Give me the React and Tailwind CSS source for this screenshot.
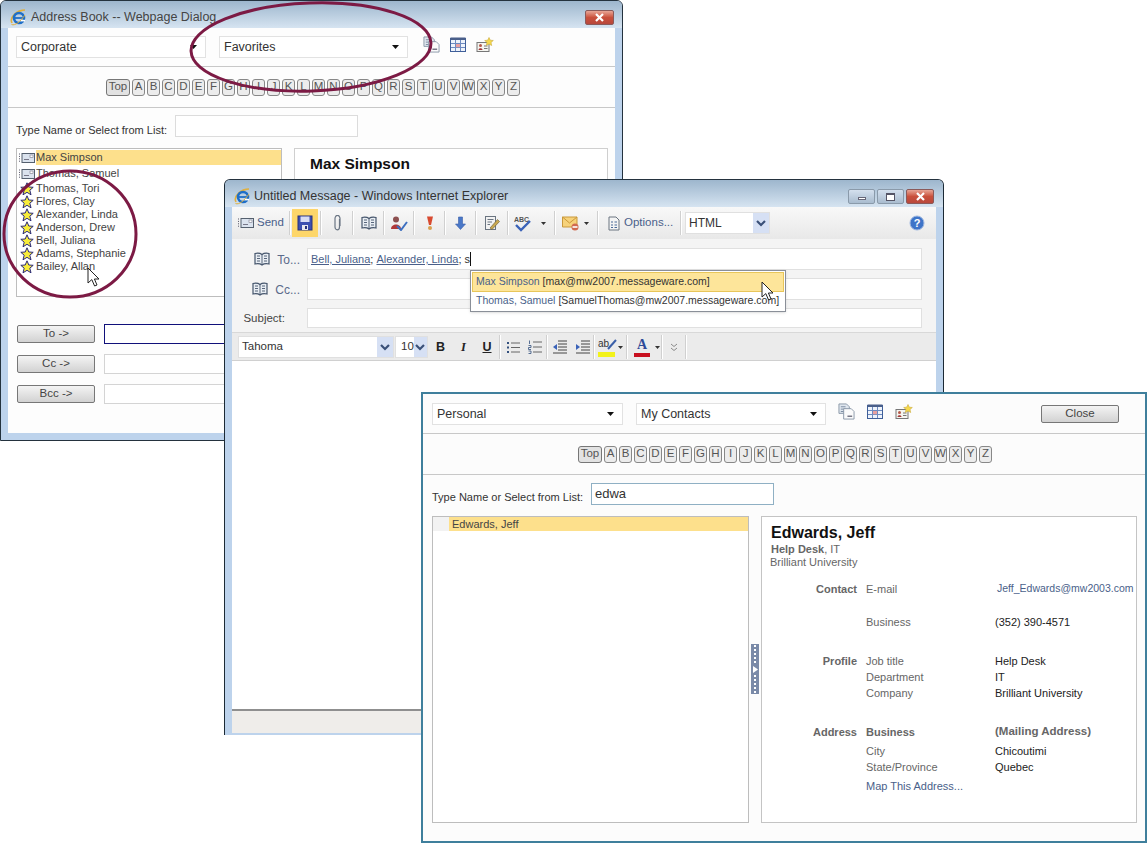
const LETTERS = 'ABCDEFGHIJKLMNOPQRSTUVWXYZ'.split('')

function IeLogo() {
  return (
    <svg width="17" height="17" viewBox="0 0 17 17" className="shrink-0">
      <path d="M2 14 C-1 8 7 1 15 1 C13 1 9 2 6 5" fill="none" stroke="#e0b040" strokeWidth="1.6" />
      <circle cx="9" cy="9" r="5" fill="none" stroke="#1f6fc8" strokeWidth="2.6" />
      <path d="M5 9 H14" stroke="#1f6fc8" strokeWidth="1.8" />
      <path d="M11 11.6 H15" stroke="#fff" strokeWidth="1.6" />
      <path d="M1.5 15.5 C5 17 10 13 15 6" fill="none" stroke="#e0b040" strokeWidth="1" />
    </svg>
  )
}

function CloseBtn({ className = 'w-[29px]' }) {
  return (
    <div className={`h-[15px] rounded-[2px] border border-[#8a5a5a] bg-gradient-to-b from-[#e7a596] via-[#c9503c] to-[#b8483c] flex items-center justify-center ${className}`}>
      <svg width="11" height="9" viewBox="0 0 11 9">
        <path d="M2 1 L9 8 M9 1 L2 8" stroke="#fff" strokeWidth="2.2" />
      </svg>
    </div>
  )
}

function Caret() {
  return (
    <svg width="7" height="4" viewBox="0 0 7 4" className="shrink-0">
      <path d="M0 0 H7 L3.5 4 Z" fill="#111" />
    </svg>
  )
}

function Select({ label, className }) {
  return (
    <div className={`h-[22px] bg-white border border-[#e2e2e2] flex items-center justify-between pl-[4px] pr-[8px] text-[12.5px] text-[#333] ${className}`}>
      <span className="mt-[2px]">{label}</span>
      <Caret />
    </div>
  )
}

function BlueSelect({ label, className, size = 'w-[16px]' }) {
  return (
    <div className={`h-[22px] bg-white border border-[#e0e0e0] flex items-center justify-between pl-[3px] text-[#333] ${className}`}>
      <span>{label}</span>
      <div className={`h-full bg-[#d6e0f4] flex items-center justify-center ${size}`}>
        <svg width="10" height="7" viewBox="0 0 10 7">
          <path d="M1 1 L5 5 L9 1" fill="none" stroke="#3a5078" strokeWidth="2.2" />
        </svg>
      </div>
    </div>
  )
}

function DocIcon() {
  return (
    <svg width="17" height="17" viewBox="0 0 18 18">
      <path d="M1 1 H9 L12 4 V11 H1 Z" fill="#dfe6ee" stroke="#8a98a8" />
      <path d="M3 4 H8 M3 6.5 H9 M3 9 H8" stroke="#7a8aa0" />
      <path d="M6 6 H14 L17 9 V17 H6 Z" fill="#fbfbfb" stroke="#8a98a8" />
      <path d="M10 14 H15" stroke="#667" strokeWidth="1.4" />
    </svg>
  )
}

function CalIcon() {
  return (
    <svg width="16" height="15" viewBox="0 0 16 15">
      <rect x="0.5" y="1.5" width="15" height="13" fill="#eef3fb" stroke="#3f5f99" />
      <rect x="0.5" y="0.5" width="15" height="2.5" fill="#4a5f8a" />
      <path d="M5.5 3 V14 M10.5 3 V14 M1 6.5 H15 M1 10.5 H15" stroke="#6d8ac0" />
      <rect x="6" y="7" width="4" height="3.2" fill="#e8a0a0" />
    </svg>
  )
}

function NewContactIcon() {
  return (
    <svg width="18" height="16" viewBox="0 0 18 16">
      <rect x="1" y="5.5" width="12" height="9" fill="#f5f5f0" stroke="#777" />
      <circle cx="4.5" cy="8.5" r="1.5" fill="#b55a4a" />
      <path d="M2.5 13 C2.5 10.5 6.5 10.5 6.5 13 Z" fill="#a33a3a" />
      <path d="M8 9 H11.5 M8 11.5 H11.5" stroke="#777" />
      <path d="M13 0.5 L14.3 3.2 L17.3 3.5 L15 5.5 L15.7 8.5 L13 7 L10.3 8.5 L11 5.5 L8.7 3.5 L11.7 3.2 Z" fill="#f6d94a" stroke="#c9a93a" strokeWidth="0.6" />
    </svg>
  )
}

function CardIcon() {
  return (
    <svg width="16" height="10" viewBox="0 0 16 10" className="shrink-0">
      <path d="M0.5 0.5 V9.5" stroke="#556" strokeDasharray="1 1.4" />
      <rect x="3" y="0.5" width="12.5" height="9" fill="#dbe3ee" stroke="#55606e" />
      <path d="M5 6.5 H10" stroke="#778" />
      <rect x="11" y="2" width="3" height="2.5" fill="#fff" stroke="#778" strokeWidth="0.6" />
    </svg>
  )
}

function Star() {
  return (
    <svg width="14" height="14" viewBox="0 0 14 14" className="shrink-0">
      <path d="M7 0.8 L8.8 5 L13.2 5.3 L9.8 8.2 L11 12.8 L7 10.3 L3 12.8 L4.2 8.2 L0.8 5.3 L5.2 5 Z" fill="#f7ec3a" stroke="#2a2a78" strokeWidth="1" strokeLinejoin="round" />
    </svg>
  )
}

function BookIcon() {
  return (
    <svg width="16" height="14" viewBox="0 0 16 14" className="shrink-0">
      <path d="M8 2.5 C6 1 3.5 1 1 1.5 V12 C3.5 11.5 6 11.5 8 13 C10 11.5 12.5 11.5 15 12 V1.5 C12.5 1 10 1 8 2.5 Z" fill="#e8edf3" stroke="#45556c" strokeWidth="1.2" />
      <path d="M8 2.5 V13 M3 4 H6 M3 6.5 H6 M3 9 H6 M10 4 H13 M10 6.5 H13 M10 9 H13" stroke="#45556c" strokeWidth="0.9" />
    </svg>
  )
}

function AlphaBar() {
  return (
    <div className="flex items-center gap-[2px] text-[11.5px] text-[#555]">
      <div className="w-[24px] h-[17px] rounded-[3px] border border-[#777] bg-[#e2e2e2] flex items-center justify-center">Top</div>
      {LETTERS.map((l) => (
        <div key={l} className="w-[13px] h-[17px] rounded-[3px] border border-[#888] bg-[#ececec] flex items-center justify-center">
          {l}
        </div>
      ))}
    </div>
  )
}

function GrayButton({ label, className }) {
  return (
    <div className={`h-[18px] rounded-[2px] border border-[#777] bg-gradient-to-b from-[#f4f4f4] to-[#d2d2d2] flex items-center justify-center text-[11.5px] text-[#444] ${className}`}>
      {label}
    </div>
  )
}

function AddressBook() {
  const starred = ['Thomas, Tori', 'Flores, Clay', 'Alexander, Linda', 'Anderson, Drew', 'Bell, Juliana', 'Adams, Stephanie', 'Bailey, Allan']
  return (
    <div className="absolute left-0 top-0 w-[623px] h-[441px] rounded-t-[6px] border border-[#24323e] bg-[#bdd3ec] flex flex-col">
      <div className="h-[27px] rounded-t-[5px] bg-gradient-to-b from-[#9db6cd] to-[#d6e4f1] flex items-center pl-[9px] pr-[8px] pt-[6px] shrink-0">
        <IeLogo />
        <span className="ml-[4px] text-[12.5px] text-[#444]">Address Book -- Webpage Dialog</span>
        <div className="ml-auto"><CloseBtn /></div>
      </div>
      <div className="mx-[7px] h-[405px] bg-[#fdfdfd] flex flex-col">
        <div className="h-[39px] shrink-0 border-b border-[#c8c8c8] flex items-center pl-[8px] pb-[1px]">
          <Select label="Corporate" className="w-[190px]" />
          <Select label="Favorites" className="w-[189px] ml-[13px]" />
          <div className="ml-[15px] mb-[4px] flex items-center gap-[10px]">
            <DocIcon />
            <CalIcon />
            <NewContactIcon />
          </div>
        </div>
        <div className="h-[41px] shrink-0 border-b border-[#c8c8c8] flex items-center pl-[98px]">
          <AlphaBar />
        </div>
        <div className="h-[40px] shrink-0 flex items-center pl-[8px] pb-[1px] text-[11px] text-[#333]">
          <span className="w-[159px] mt-[5px]">Type Name or Select from List:</span>
          <div className="w-[183px] h-[22px] mb-[4px] border border-[#dcdcdc] bg-white"></div>
        </div>
        <div className="flex items-start pl-[8px] shrink-0">
          <div className="w-[266px] h-[149px] border border-[#bdbdbd] bg-white pt-[1px] text-[11px] text-[#444] overflow-hidden">
            <div className="flex items-center h-[15px] pl-[2px]">
              <CardIcon />
              <span className="bg-[#fde08c] flex-1 h-full flex items-center ml-[1px]">Max Simpson</span>
            </div>
            <div className="flex items-center h-[15px] mt-[1px] pl-[2px]">
              <CardIcon />
              <span className="ml-[1px]">Thomas, Samuel</span>
            </div>
            <div className="mt-[1px]">
              {starred.map((n) => (
                <div key={n} className="flex items-center h-[13px] pl-[3px] gap-[2px]">
                  <Star />
                  <span>{n}</span>
                </div>
              ))}
            </div>
          </div>
          <div className="ml-[12px] w-[314px] h-[149px] border border-[#cfcfcf] bg-white pl-[15px] pt-[3px] text-[15.5px] font-bold text-[#111]">Max Simpson</div>
        </div>
        <div className="mt-[27px] pl-[9px] flex flex-col gap-[10px]">
          <div className="flex items-center">
            <GrayButton label="To ->" className="w-[78px]" />
            <div className="ml-[9px] w-[300px] h-[20px] border border-[#10107a] bg-white"></div>
          </div>
          <div className="flex items-center">
            <GrayButton label="Cc ->" className="w-[78px]" />
            <div className="ml-[9px] w-[300px] h-[20px] border border-[#d4d4d4] bg-white"></div>
          </div>
          <div className="flex items-center">
            <GrayButton label="Bcc ->" className="w-[78px]" />
            <div className="ml-[9px] w-[300px] h-[20px] border border-[#d4d4d4] bg-white"></div>
          </div>
        </div>
      </div>
    </div>
  )
}

function Sep() {
  return <div className="w-[2px] h-[24px] bg-[#d0d0d0] border-r border-white shrink-0"></div>
}

function SmallCaret() {
  return (
    <svg width="5" height="3" viewBox="0 0 5 3" className="shrink-0">
      <path d="M0 0 H5 L2.5 3 Z" fill="#333" />
    </svg>
  )
}

function MainToolbar() {
  return (
    <div className="h-[32px] shrink-0 bg-gradient-to-b from-[#f8f8f8] to-[#e8e8e8] flex items-center text-[11.5px] text-[#4a5f8a]">
      <div className="flex items-center pl-[6px] w-[57px] gap-[3px]">
        <CardIcon />
        <span>Send</span>
      </div>
      <Sep />
      <div className="w-[26px] h-[28px] ml-[1px] bg-[#fdd66a] flex items-center justify-center">
        <svg width="16" height="16" viewBox="0 0 16 16">
          <rect x="1" y="1" width="14" height="14" fill="#3c4fb0" stroke="#28307a" />
          <rect x="3.5" y="1.5" width="9" height="5.5" fill="#d8dcf4" />
          <rect x="5" y="10" width="6" height="5" fill="#e8e8ee" />
          <rect x="8" y="11" width="2" height="3" fill="#28307a" />
        </svg>
      </div>
      <div className="ml-[2px]"><Sep /></div>
      <div className="w-[30px] flex items-center justify-center">
        <svg width="9" height="16" viewBox="0 0 9 16">
          <path d="M6.5 4 V12 A2 2.5 0 0 1 2 12 V3.5 A2 2.5 0 0 1 7 3.5 V11" fill="none" stroke="#6b7684" strokeWidth="1.2" />
        </svg>
      </div>
      <Sep />
      <div className="w-[29px] flex items-center justify-center"><BookIcon /></div>
      <Sep />
      <div className="w-[28px] flex items-center justify-center">
        <svg width="18" height="16" viewBox="0 0 18 16">
          <circle cx="6" cy="4.5" r="3" fill="#8c5050" />
          <path d="M1 14 C1 8 11 8 11 14 Z" fill="#b03838" />
          <path d="M7 11 L11 15 L17 7" fill="none" stroke="#3d6fc0" strokeWidth="2" />
        </svg>
      </div>
      <Sep />
      <div className="w-[29px] flex items-center justify-center">
        <svg width="8" height="16" viewBox="0 0 8 16">
          <path d="M1 1.5 H7 L5 10 H3 Z" fill="#d84a30" />
          <circle cx="4" cy="13" r="2" fill="#d8a050" />
        </svg>
      </div>
      <Sep />
      <div className="w-[29px] flex items-center justify-center">
        <svg width="11" height="14" viewBox="0 0 11 14">
          <path d="M3.5 1 H7.5 V8 H10.5 L5.5 13.5 L0.5 8 H3.5 Z" fill="#4a78c8" stroke="#3a5ea8" strokeWidth="0.6" />
        </svg>
      </div>
      <Sep />
      <div className="w-[30px] flex items-center justify-center">
        <svg width="16" height="16" viewBox="0 0 16 16">
          <rect x="1.5" y="1.5" width="10" height="13" fill="#f2f2f2" stroke="#6a7480" />
          <path d="M3.5 4.5 H9.5 M3.5 7 H8 M3.5 9.5 H6" stroke="#6a7480" />
          <path d="M6 13 L13.5 4.5 L15.5 6.5 L8 14.5 Z" fill="#c9a850" stroke="#6a5a30" strokeWidth="0.6" />
        </svg>
      </div>
      <Sep />
      <div className="w-[45px] flex items-center pl-[5px] gap-[9px]">
        <svg width="18" height="17" viewBox="0 0 18 17">
          <text x="0" y="6.5" fontSize="7" fontWeight="700" fill="#555" fontFamily="'Liberation Sans',sans-serif">ABC</text>
          <path d="M2 10 L7 15 L16 6" fill="none" stroke="#3a62b8" strokeWidth="2.4" />
        </svg>
        <SmallCaret />
      </div>
      <Sep />
      <div className="w-[41px] flex items-center pl-[6px] gap-[4px]">
        <svg width="18" height="15" viewBox="0 0 18 15" className="shrink-0">
          <path d="M0.5 1 H15 V11 H0.5 Z" fill="#f6d27a" stroke="#c9983a" />
          <path d="M0.5 1 L7.5 7 L15 1" fill="none" stroke="#c9983a" />
          <circle cx="13" cy="11" r="3.5" fill="#d06a50" />
          <rect x="10.5" y="10.2" width="5" height="1.6" fill="#fff" />
        </svg>
        <SmallCaret />
      </div>
      <Sep />
      <div className="flex items-center w-[81px] pl-[9px] gap-[4px]">
        <svg width="12" height="15" viewBox="0 0 12 15" className="shrink-0">
          <path d="M1 1 H8 L11 4 V14 H1 Z" fill="#f4f4f4" stroke="#6a7480" />
          <path d="M3 6 H5 M6.5 6 H9 M3 9 H5 M6.5 9 H9 M3 11.5 H5 M6.5 11.5 H9" stroke="#4a6a98" />
        </svg>
        <span className="whitespace-nowrap">Options...</span>
      </div>
      <Sep />
      <BlueSelect label="HTML" className="w-[85px] ml-[3px] text-[#222] text-[12px]" />
      <svg width="16" height="16" viewBox="0 0 16 16" className="ml-auto mr-[11px]">
        <circle cx="8" cy="8" r="7" fill="#3e74c8" stroke="#9fb8e0" />
        <text x="8" y="12" textAnchor="middle" fontSize="11" fontWeight="700" fill="#fff" fontFamily="'Liberation Sans',sans-serif">?</text>
      </svg>
    </div>
  )
}

function FormatToolbar() {
  return (
    <div className="h-[29px] shrink-0 bg-[#ebebeb] border-t border-[#d8d8d8] border-b border-b-[#d0d0d0] flex items-center pl-[6px] pt-[1px] text-[11.5px] text-[#333]">
      <BlueSelect label="Tahoma" className="w-[156px]" />
      <BlueSelect label="10" className="w-[33px] ml-[1px] pl-[5px]" size="w-[15px]" />
      <div className="w-[23px] text-center font-bold text-[12.5px] text-[#222] ml-[1px]">B</div>
      <div className="w-[23px] text-center font-bold italic text-[12.5px] font-['Liberation_Serif',serif] text-[#222]">I</div>
      <div className="w-[24px] text-center font-bold underline text-[12.5px] text-[#222]">U</div>
      <Sep />
      <div className="w-[23px] flex justify-center">
        <svg width="14" height="13" viewBox="0 0 14 13">
          <path d="M5 2 H14 M5 6.5 H14 M5 11 H14" stroke="#666" />
          <path d="M1 1 H3 V3 H1 Z M1 5.5 H3 V7.5 H1 Z M1 10 H3 V12 H1 Z" fill="#33507e" />
        </svg>
      </div>
      <div className="w-[22px] flex justify-center">
        <svg width="14" height="14" viewBox="0 0 14 14">
          <path d="M5 2 H14 M5 7 H14 M5 12 H14" stroke="#666" />
          <path d="M1.5 0.5 V4 M0.5 5.5 H3 V7.5 H0.5 V9.5 H3 M0.5 11 H3 V13.5 H0.5" fill="none" stroke="#33507e" strokeWidth="0.8" />
        </svg>
      </div>
      <Sep />
      <div className="w-[23px] flex justify-center">
        <svg width="15" height="14" viewBox="0 0 15 14">
          <path d="M6 1 H15 M6 4 H15 M6 7 H15 M6 10 H15 M1 13 H15" stroke="#444" />
          <path d="M5 4 L1 7 L5 10 Z" fill="#3a62b8" />
        </svg>
      </div>
      <div className="w-[22px] flex justify-center">
        <svg width="15" height="14" viewBox="0 0 15 14">
          <path d="M6 1 H15 M6 4 H15 M6 7 H15 M6 10 H15 M1 13 H15" stroke="#444" />
          <path d="M1 4 L5 7 L1 10 Z" fill="#3a62b8" />
        </svg>
      </div>
      <Sep />
      <div className="w-[31px] flex items-center pl-[3px] gap-[3px]">
        <div className="w-[17px] h-[19px] flex flex-col items-start relative">
          <span className="text-[10px] leading-[12px] text-[#333]">ab</span>
          <svg width="12" height="12" viewBox="0 0 12 12" className="absolute right-[-3px] top-0">
            <path d="M2 11 L10 2" stroke="#3a5fa8" strokeWidth="2" />
          </svg>
          <div className="absolute bottom-0 w-[17px] h-[5px] bg-[#f2f21a]"></div>
        </div>
        <SmallCaret />
      </div>
      <Sep />
      <div className="w-[33px] flex items-center pl-[6px] gap-[5px]">
        <div className="w-[16px] flex flex-col items-center">
          <span className="font-bold text-[14px] leading-[14px] text-[#2e4a98] font-['Liberation_Serif',serif]">A</span>
          <div className="w-[16px] h-[4px] bg-[#c80f1e] mt-[1px]"></div>
        </div>
        <SmallCaret />
      </div>
      <Sep />
      <div className="w-[22px] flex justify-center">
        <svg width="8" height="9" viewBox="0 0 8 9">
          <path d="M1 1 L4 3.5 L7 1 M1 5 L4 7.5 L7 5" fill="none" stroke="#8a8a8a" />
        </svg>
      </div>
      <Sep />
    </div>
  )
}

function FieldRow({ label, children, className }) {
  return (
    <div className={`flex items-center ${className}`}>
      <div className="w-[75px] flex items-center justify-end gap-[7px] pr-[7px] text-[12px] text-[#5a6a8a] shrink-0">
        {label}
      </div>
      {children}
    </div>
  )
}

function Message() {
  return (
    <div className="absolute left-[224px] top-[179px] w-[720px] h-[556px] rounded-t-[6px] border border-t-[#24323e] border-x-[#1c2a35] border-b-0 bg-[#bdd3ec] flex flex-col">
      <div className="h-[27px] shrink-0 rounded-t-[5px] bg-gradient-to-b from-[#9db6cd] to-[#d6e4f1] flex items-center pl-[9px] pr-[9px] pt-[6px]">
        <IeLogo />
        <span className="ml-[3px] text-[12.5px] text-[#333]">Untitled Message - Windows Internet Explorer</span>
        <div className="ml-auto flex items-center gap-[2px]">
          <div className="w-[27px] h-[15px] rounded-[2px] border border-[#8a9aaa] bg-gradient-to-b from-[#d4e0ee] to-[#a9bccf] flex items-center justify-center">
            <div className="w-[8px] h-[3px] mt-[4px] bg-white border border-[#667]"></div>
          </div>
          <div className="w-[27px] h-[15px] rounded-[2px] border border-[#8a9aaa] bg-gradient-to-b from-[#d4e0ee] to-[#a9bccf] flex items-center justify-center">
            <div className="w-[9px] h-[8px] bg-white border border-[#556] border-t-2"></div>
          </div>
          <CloseBtn className="w-[28px]" />
        </div>
      </div>
      <div className="mx-[7px] flex-1 flex flex-col bg-white min-h-0">
        <MainToolbar />
        <div className="h-[93px] shrink-0 bg-[#f4f4f4] pt-[9px] relative">
          <FieldRow
            label={<><BookIcon /><span className="mt-[2px]">To...</span></>}
            className="h-[22px]"
          >
            <div className="w-[615px] h-[22px] border border-[#e0e0e0] bg-white flex items-center pl-[3px] text-[11px] text-[#333]">
              <span className="underline text-[#4a5f8a]">Bell, Juliana</span>
              <span>;&nbsp;</span>
              <span className="underline text-[#4a5f8a]">Alexander, Linda</span>
              <span>; s</span>
              <div className="w-px h-[14px] bg-[#111]"></div>
            </div>
          </FieldRow>
          <FieldRow
            label={<><BookIcon /><span className="mt-[2px]">Cc...</span></>}
            className="h-[22px] mt-[8px]"
          >
            <div className="w-[615px] h-[22px] border border-[#e0e0e0] bg-white"></div>
          </FieldRow>
          <FieldRow label={<span className="text-[#444] text-[11.5px] mr-[15px] mt-[1px]">Subject:</span>} className="h-[20px] mt-[8px]">
            <div className="w-[615px] h-[20px] border border-[#e0e0e0] bg-white"></div>
          </FieldRow>
          {/* suggestion popup over the fields */}
          <div className="absolute left-[238px] top-[31px] w-[316px] h-[42px] border border-[#8a8f98] bg-white p-[1px] text-[10.5px] text-[#333] whitespace-nowrap shadow-sm">
            <div className="h-[20px] bg-[#fde59a] border border-[#e8c65a] flex items-center pl-[3px]">
              <span className="text-[#4a5f8a]">Max Simpson</span>
              <span className="ml-[3px]">[max@mw2007.messageware.com]</span>
            </div>
            <div className="h-[18px] flex items-center pl-[4px]">
              <span className="text-[#4a5f8a]">Thomas, Samuel</span>
              <span className="ml-[3px]">[SamuelThomas@mw2007.messageware.com]</span>
            </div>
          </div>
        </div>
        <FormatToolbar />
        <div className="flex-1 bg-white border-b-2 border-[#8f8f8f]"></div>
        <div className="h-[22px] shrink-0 bg-[#efedea]"></div>
      </div>
      <div className="h-[2px] shrink-0"></div>
    </div>
  )
}

function Row({ label, name, value, className = '', strong, link, email }) {
  return (
    <div className={`flex h-[16px] items-center whitespace-nowrap ${className}`}>
      <div className="w-[95px] text-right font-bold text-[#666]">{label}</div>
      <div className={`w-[129px] ml-[9px] ${strong ? 'font-bold text-[#666]' : link ? 'text-[#4a5f8a]' : 'text-[#666]'}`}>{name}</div>
      <div className={`${strong ? 'font-bold text-[11.5px] text-[#666]' : email ? 'text-[10.5px] ml-[2px] text-[#4a5f8a]' : 'text-[#222]'}`}>{value}</div>
    </div>
  )
}

function Contacts() {
  return (
    <div className="absolute left-[421px] top-[392px] w-[726px] h-[451px] border-2 border-[#3f7f9c] bg-[#fcfcfc] flex flex-col">
      <div className="h-[40px] shrink-0 border-b border-[#c8c8c8] flex items-center pl-[9px] pr-[26px]">
        <Select label="Personal" className="w-[191px]" />
        <Select label="My Contacts" className="w-[190px] ml-[13px]" />
        <div className="ml-[12px] mb-[4px] flex items-center gap-[12px]">
          <DocIcon />
          <CalIcon />
          <NewContactIcon />
        </div>
        <GrayButton label="Close" className="w-[78px] ml-auto" />
      </div>
      <div className="h-[41px] shrink-0 border-b border-[#c8c8c8] flex items-center pl-[155px]">
        <AlphaBar />
      </div>
      <div className="h-[41px] shrink-0 flex items-center pl-[9px] text-[11px] text-[#333]">
        <span className="w-[159px] mt-[4px]">Type Name or Select from List:</span>
        <div className="w-[183px] h-[22px] mb-[3px] border border-[#8fb0c4] bg-white pl-[3px] text-[13px] text-[#333] flex items-center">edwa</div>
      </div>
      <div className="flex items-stretch h-[307px] pl-[9px] shrink-0">
        <div className="w-[317px] border border-[#bdbdbd] bg-white text-[11px] text-[#444]">
          <div className="flex h-[14px]">
            <div className="w-[16px] bg-[#f2f2f2]"></div>
            <div className="flex-1 bg-[#fde08c] flex items-center pl-[3px]">Edwards, Jeff</div>
          </div>
        </div>
        <div className="w-[12px] flex items-start relative shrink-0">
          <div className="absolute left-[2px] top-[128px] w-[8px] h-[50px] bg-[#7a8aa8] flex flex-col items-center justify-between py-[1px]">
            <div className="flex flex-col gap-[2px]">
              {[0, 1, 2, 3, 4].map((i) => <div key={i} className="w-[2px] h-[2px] bg-white"></div>)}
            </div>
            <svg width="5" height="7" viewBox="0 0 5 7"><path d="M0 0 L5 3.5 L0 7 Z" fill="#fff" /></svg>
            <div className="flex flex-col gap-[2px]">
              {[0, 1, 2, 3, 4].map((i) => <div key={i} className="w-[2px] h-[2px] bg-white"></div>)}
            </div>
          </div>
        </div>
        <div className="w-[376px] border border-[#c4c4c4] bg-white pt-[7px] text-[11px] overflow-hidden">
          <div className="pl-[9px] text-[16px] leading-[18px] font-bold text-[#111]">Edwards, Jeff</div>
          <div className="pl-[9px] leading-[13px] mt-[1px] text-[#666]"><b>Help Desk</b>, IT</div>
          <div className="pl-[8px] leading-[13px] text-[#666]">Brilliant University</div>
          <div className="mt-[12px]">
            <Row label="Contact" name="E-mail" value="Jeff_Edwards@mw2003.com" email />
            <Row name="Business" value="(352) 390-4571" className="mt-[17px]" />
            <Row label="Profile" name="Job title" value="Help Desk" className="mt-[23px]" />
            <Row name="Department" value="IT" />
            <Row name="Company" value="Brilliant University" />
            <Row label="Address" name="Business" value="(Mailing Address)" strong className="mt-[23px]" />
            <Row name="City" value="Chicoutimi" className="mt-[3px]" />
            <Row name="State/Province" value="Quebec" />
            <Row name="Map This Address..." link className="mt-[3px]" />
          </div>
        </div>
      </div>
    </div>
  )
}

function Cursor({ className }) {
  return (
    <svg width="14" height="20" viewBox="0 0 14 20" className={`absolute ${className}`}>
      <path d="M1 1 V16 L4.8 12.6 L7.6 19 L10 18 L7.4 12 H12 Z" fill="#fff" stroke="#222" strokeWidth="1" strokeLinejoin="round" />
    </svg>
  )
}

export default function App() {
  return (
    <div className="relative w-[1148px] h-[844px] bg-white overflow-hidden font-['Liberation_Sans',sans-serif] text-[11px]">
      <AddressBook />
      {/* hand drawn circles on the first dialog */}
      <svg width="440" height="300" viewBox="0 0 440 300" className="absolute left-0 top-0">
        <ellipse cx="311" cy="47" rx="120" ry="44" fill="none" stroke="#7c1a44" strokeWidth="3" transform="rotate(-2 311 47)" />
        <ellipse cx="70" cy="234" rx="66" ry="63" fill="none" stroke="#7c1a44" strokeWidth="3" />
      </svg>
      <Cursor className="left-[87px] top-[267px]" />
      <Message />
      <Cursor className="left-[761px] top-[281px]" />
      <Contacts />
    </div>
  )
}
